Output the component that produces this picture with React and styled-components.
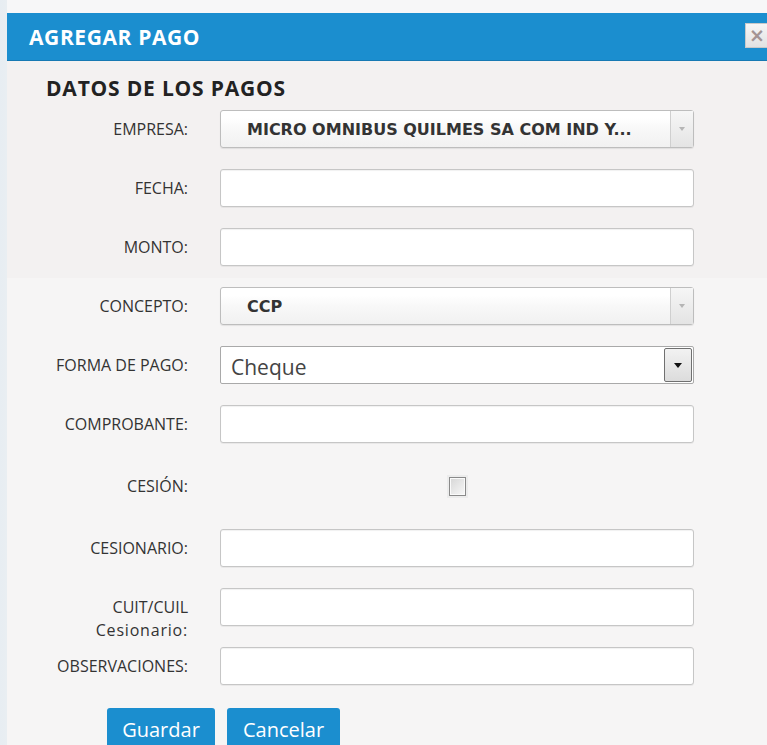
import React, { useState } from 'react';
import styled, { createGlobalStyle } from 'styled-components';

const GlobalStyle = createGlobalStyle`
  html, body {
    margin: 0;
    padding: 0;
    background: #f7f7f8;
    font-family: "Open Sans", "Liberation Sans", sans-serif;
    overflow: hidden;
  }
`;

// Page backdrop
const Page = styled.div`
  min-height: 745px;
  padding: 13px 0 0 7px;
  background: linear-gradient(90deg, #e7edf2 0, #e9eef2 7px, #f7f7f8 7px);
  box-sizing: border-box;
`;

const Dialog = styled.div`
  width: 760px;
  min-height: 732px;
  background: linear-gradient(180deg, #f3f1f1 0, #f3f1f1 265px, #f6f5f5 265px);
`;

const Header = styled.div`
  height: 48px;
  background: #1b8ecf;
  border-bottom: 1px solid #1679b3;
  box-sizing: border-box;
  display: flex;
  align-items: center;
  justify-content: space-between;
  padding-left: 22px;
`;

const HeaderTitle = styled.h1`
  margin: 0;
  font-size: 21px;
  font-weight: 700;
  color: #ffffff;
  letter-spacing: 0.6px;
`;

const CloseButton = styled.button`
  width: 22px;
  height: 25px;
  margin-top: -2px;
  padding: 0 0 0 3px;
  border: 1px solid #c9c9c9;
  border-right: none;
  background: linear-gradient(#f6f6f6, #e2e2e2);
  color: #a39494;
  font-family: "DejaVu Sans", sans-serif;
  font-size: 19px;
  font-weight: 700;
  line-height: 1;
  text-align: left;
  cursor: pointer;
`;

const Body = styled.div`
  padding: 16px 0 0 0;
`;

const SectionTitle = styled.h2`
  margin: 0 0 11px 39px;
  font-size: 21px;
  line-height: 22px;
  font-weight: 700;
  color: #222;
  letter-spacing: 0.8px;
`;

const Rows = styled.div`
  display: flex;
  flex-direction: column;
  gap: 21px;
`;

const Row = styled.div`
  display: flex;
  align-items: flex-start;
  height: ${(p) => p.$height || 38}px;
`;

const Label = styled.label`
  width: 181px;
  margin-right: 32px;
  padding-top: ${(p) => p.$top ?? 9}px;
  text-align: right;
  font-size: 16px;
  line-height: ${(p) => p.$line || 20}px;
  color: #333;
  flex-shrink: 0;
`;

const LabelSub = styled.span`
  display: block;
  letter-spacing: 0.8px;
`;

const TextInput = styled.input`
  width: 474px;
  height: 38px;
  box-sizing: border-box;
  padding: 0 10px;
  background: #fff;
  border: 1px solid #c6c6c6;
  border-radius: 3px;
  box-shadow: inset 0 1px 1px rgba(0, 0, 0, 0.06), 0 1px 0 rgba(0, 0, 0, 0.05);
  font-family: "Open Sans", sans-serif;
  font-size: 16px;
  outline: none;
`;

// Chosen-like dropdown
const ChosenBox = styled.div`
  width: 474px;
  height: 38px;
  box-sizing: border-box;
  display: flex;
  align-items: stretch;
  border: 1px solid #bdbdbd;
  border-radius: 3px;
  background: linear-gradient(#ffffff 20%, #f8f8f8 50%, #f1f1f1 100%);
  box-shadow: 0 1px 1px rgba(0, 0, 0, 0.08);
  cursor: pointer;
`;

const ChosenText = styled.span`
  flex: 1;
  display: flex;
  align-items: center;
  padding-left: 26px;
  font-family: "DejaVu Sans", Verdana, sans-serif;
  font-weight: 700;
  font-size: 16px;
  color: #333;
  white-space: nowrap;
  overflow: hidden;
`;

const ChosenArrow = styled.span`
  width: 22px;
  border-left: 1px solid #cfcfcf;
  background: linear-gradient(#f6f6f6, #e4e4e4);
  display: flex;
  align-items: center;
  justify-content: center;

  &::after {
    content: '';
    border-left: 3px solid transparent;
    border-right: 3px solid transparent;
    border-top: 4px solid #b5b5b5;
  }
`;

// Native-looking select
const NativeSelect = styled.div`
  width: 474px;
  height: 38px;
  box-sizing: border-box;
  display: flex;
  align-items: stretch;
  background: #fff;
  border: 1px solid #a9a9a9;
  border-radius: 2px;
`;

const NativeText = styled.span`
  flex: 1;
  display: flex;
  align-items: center;
  padding: 3px 0 0 10px;
  font-size: 21px;
  color: #444;
`;

const NativeArrow = styled.span`
  width: 26px;
  margin: 1px;
  border: 1px solid #707070;
  border-radius: 2px;
  background: linear-gradient(#f2f2f2, #dcdcdc);
  display: flex;
  align-items: center;
  justify-content: center;

  &::after {
    content: '';
    border-left: 4px solid transparent;
    border-right: 4px solid transparent;
    border-top: 5px solid #111;
  }
`;

const CheckCell = styled.div`
  width: 474px;
  height: 100%;
  display: flex;
  align-items: center;
  justify-content: center;
`;

const CheckBox = styled.span`
  width: 15px;
  height: 17px;
  border: 1px solid #8a8a8a;
  background: linear-gradient(135deg, #d6d6d6, #f8f8f8);
  box-shadow: inset 0 0 0 1px #fafafa, 0 0 0 2px #ececec;
  cursor: pointer;
`;

const Actions = styled.div`
  display: flex;
  gap: 12px;
  padding: 23px 0 0 100px;
`;

const Button = styled.button`
  width: ${(p) => p.$w}px;
  height: 42px;
  padding: 0;
  border: none;
  border-radius: 3px;
  background: #1b8ecf;
  color: #fff;
  font-family: "Open Sans", sans-serif;
  font-size: 20px;
  cursor: pointer;
`;

const App = () => {
  const [cesion, setCesion] = useState(false);

  return (
    <>
      <GlobalStyle />
      <Page>
        <Dialog>
          <Header>
            <HeaderTitle>AGREGAR PAGO</HeaderTitle>
            <CloseButton>×</CloseButton>
          </Header>
          <Body>
            <SectionTitle>DATOS DE LOS PAGOS</SectionTitle>
            <Rows>
              <Row>
                <Label>EMPRESA:</Label>
                <ChosenBox>
                  <ChosenText>MICRO OMNIBUS QUILMES SA COM IND Y...</ChosenText>
                  <ChosenArrow />
                </ChosenBox>
              </Row>
              <Row>
                <Label>FECHA:</Label>
                <TextInput />
              </Row>
              <Row>
                <Label>MONTO:</Label>
                <TextInput />
              </Row>
              <Row>
                <Label>CONCEPTO:</Label>
                <ChosenBox>
                  <ChosenText>CCP</ChosenText>
                  <ChosenArrow />
                </ChosenBox>
              </Row>
              <Row>
                <Label>FORMA DE PAGO:</Label>
                <NativeSelect>
                  <NativeText>Cheque</NativeText>
                  <NativeArrow />
                </NativeSelect>
              </Row>
              <Row>
                <Label>COMPROBANTE:</Label>
                <TextInput />
              </Row>
              <Row $height={44}>
                <Label $top={12}>CESIÓN:</Label>
                <CheckCell>
                  <CheckBox onClick={() => setCesion(!cesion)} />
                </CheckCell>
              </Row>
              <Row>
                <Label>CESIONARIO:</Label>
                <TextInput />
              </Row>
              <Row>
                <Label $top={8} $line={23}>
                  CUIT/CUIL
                  <LabelSub>Cesionario:</LabelSub>
                </Label>
                <TextInput />
              </Row>
              <Row>
                <Label>OBSERVACIONES:</Label>
                <TextInput />
              </Row>
            </Rows>
            <Actions>
              <Button $w={108}>Guardar</Button>
              <Button $w={113}>Cancelar</Button>
            </Actions>
          </Body>
        </Dialog>
      </Page>
    </>
  );
};

export default App;
